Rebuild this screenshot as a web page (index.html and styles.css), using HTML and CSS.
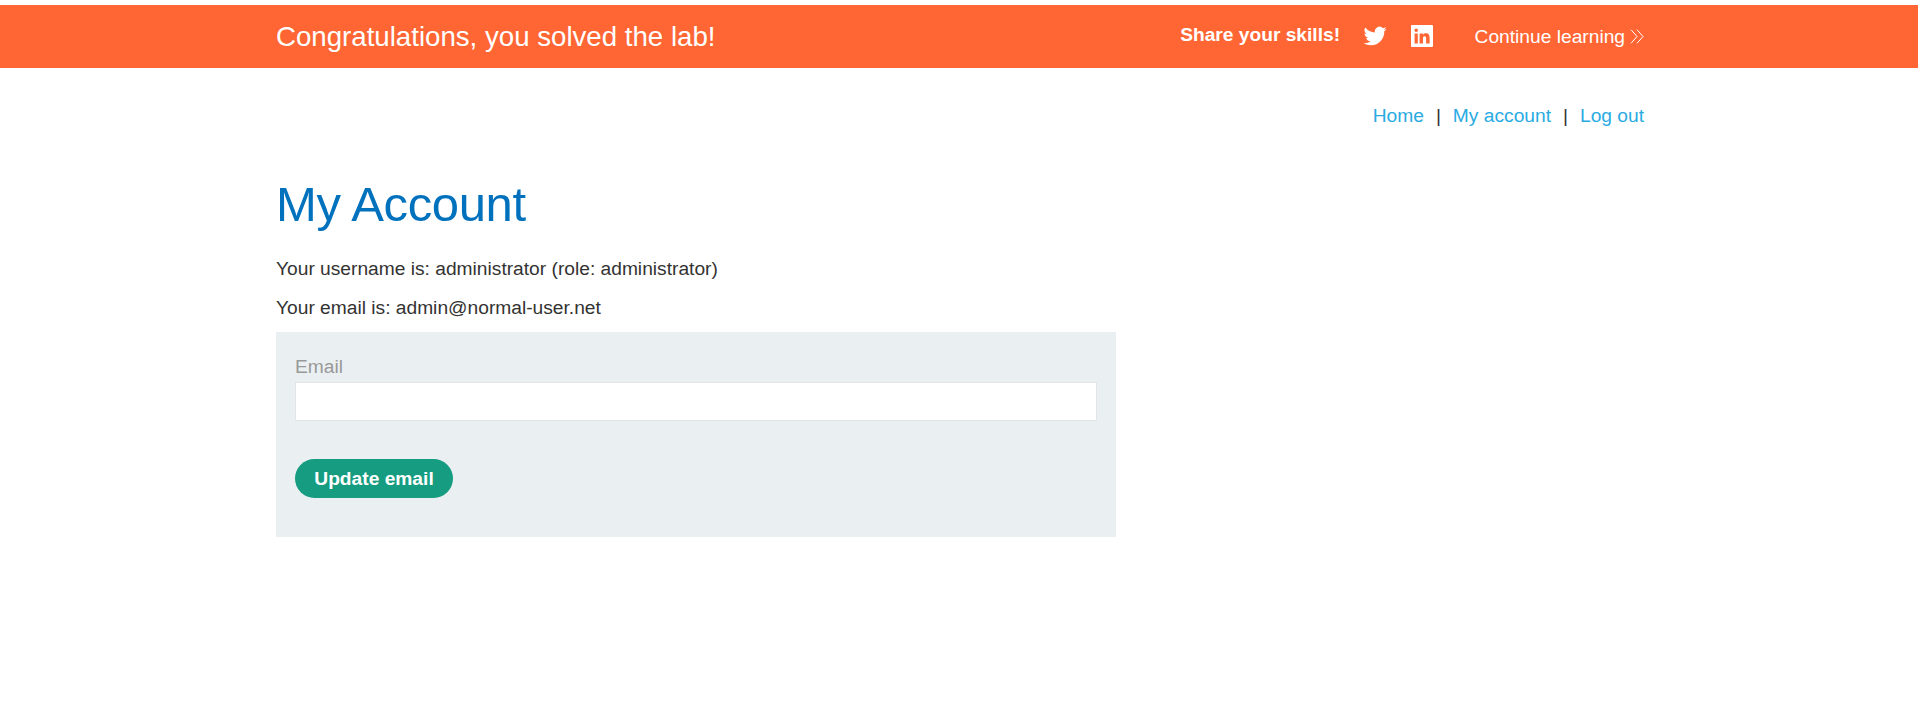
FILE: index.html
```html
<!DOCTYPE html>
<html lang="en">
<head>
<meta charset="utf-8">
<title>My Account</title>
<link rel="stylesheet" href="styles.css">
</head>
<body>
<section class="banner">
  <div class="container banner-row">
    <h4 class="banner-title">Congratulations, you solved the lab!</h4>
    <div class="share">
      <span class="share-label">Share your skills!</span>
      <a class="twitter"><svg width="24" height="24" viewBox="0 0 24 24"><path fill="#fff" d="M23.6 4.9c-.85.38-1.75.63-2.7.74a4.7 4.7 0 0 0 2.07-2.6c-.9.54-1.92.93-2.99 1.14a4.7 4.7 0 0 0-8.03 4.3A13.4 13.4 0 0 1 2.24 3.55a4.7 4.7 0 0 0 1.46 6.3 4.7 4.7 0 0 1-2.13-.6v.06a4.7 4.7 0 0 0 3.78 4.62c-.7.19-1.42.22-2.13.08a4.7 4.7 0 0 0 4.4 3.27A9.5 9.5 0 0 1 .6 19.23a13.4 13.4 0 0 0 7.25 2.13c8.7 0 13.8-7.35 13.4-14.06.92-.66 1.72-1.48 2.35-2.4z"/></svg></a>
      <a class="linkedin"><svg width="22" height="22" viewBox="0 0 22 22"><path fill="#fff" fill-rule="evenodd" d="M1 0h20a1 1 0 0 1 1 1v20a1 1 0 0 1-1 1H1a1 1 0 0 1-1-1V1a1 1 0 0 1 1-1zM3.6 8.4v10h3.2v-10zM5.2 3.5a1.8 1.8 0 1 0 0 3.6 1.8 1.8 0 0 0 0-3.6zM8.6 8.4v10H12v-4.9c0-1.4.4-2.3 1.7-2.3s1.4 1.2 1.4 2.4v4.8h3.5V13c0-2.7-.7-4.8-3.8-4.8-1.5 0-2.4.7-2.9 1.6V8.4z"/></svg></a>
      <a class="continue">Continue learning<svg width="14" height="15" viewBox="0 0 14 15"><path fill="none" stroke="#fff" d="M1 .7l6 6.8-6 6.8M7 .7l6 6.8-6 6.8"/></svg></a>
    </div>
  </div>
</section>
<main class="container">
  <nav class="nav"><a>Home</a><span>|</span><a>My account</a><span>|</span><a>Log out</a></nav>
  <h1>My Account</h1>
  <p>Your username is: administrator (role: administrator)</p>
  <p>Your email is: admin@normal-user.net</p>
  <form class="email-form">
    <label for="email">Email</label>
    <input id="email" type="email">
    <button type="button">Update email</button>
  </form>
</main>
</body>
</html>
```
FILE: styles.css
```css
* { box-sizing: border-box; }
body {
  margin: 0;
  padding-top: 5px;
  background: #fff;
  color: #333332;
  font: 19.2px/23px "Liberation Sans", Arial, sans-serif;
}
.container { width: 1370px; margin: 0 auto; padding-left: 2px; }
.banner { height: 63px; background: #ff6633; color: #fff; }
.banner-row { display: flex; justify-content: space-between; padding-top: 15px; }
.banner-title { margin: 0; font-size: 27.65px; font-weight: 400; line-height: 33px; }
.share { display: flex; align-items: flex-start; }
.share-label { font-weight: 700; padding-top: 3px; }
.share svg { display: block; }
.twitter { margin: 4px 0 0 23px; }
.linkedin { margin: 5.4px 0 0 23.7px; }
.continue { display: flex; margin-left: 41.8px; padding-top: 5px; }
.continue svg { margin: 4px 0 0 5px; }
.nav { display: flex; justify-content: flex-end; gap: 12px; padding-top: 36px; }
.nav a { color: #29abe2; }
h1 { margin: 44px 0 19px; color: #0071bd; font-size: 49px; font-weight: 400; line-height: 67px; letter-spacing: -.35px; }
p { margin: 18px 0 -2px; }
.email-form { display: flex; flex-direction: column; align-items: flex-start; width: 840px; height: 205px; margin-top: 15px; padding: 23px 19px; background: #eaf0f2; }
.email-form label { color: #999; }
.email-form input { width: 802px; height: 39px; margin: 4px 0 38px; border: 1px solid #e4e4e4; background: #fff; }
.email-form button { width: 158px; height: 39px; border: 0; border-radius: 20px; padding: 0; background: #169c80; color: #fff; font: 700 19.2px/39px "Liberation Sans", Arial, sans-serif; }
```
